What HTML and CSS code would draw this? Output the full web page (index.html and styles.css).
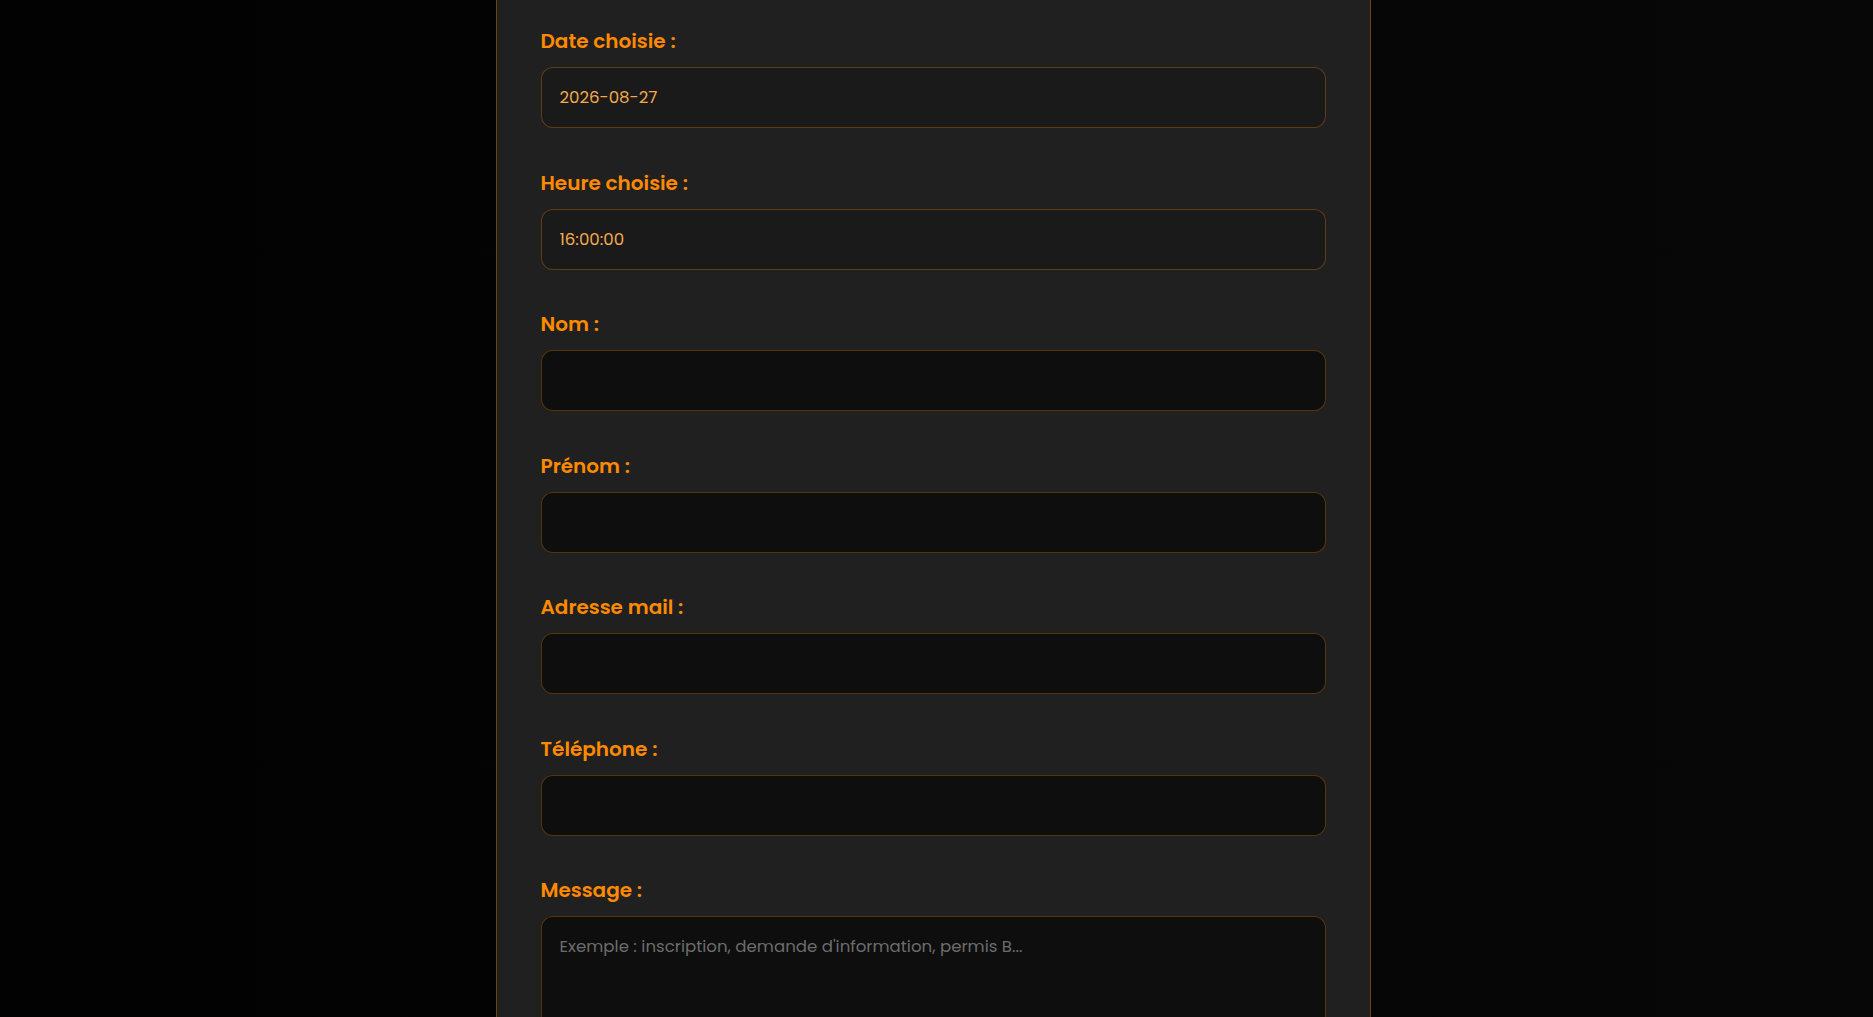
FILE: index.html
```html
<!DOCTYPE html>
<html lang="fr">
<head>
  <meta charset="UTF-8" />
  <meta name="viewport" content="width=device-width, initial-scale=1.0" />
  <title>Réservation</title>
  <link rel="stylesheet" href="styles.css">
</head>
<body>
  <div class="page">
    <div class="form-container">
      <form id="reservationForm">
        <div class="field">
          <label for="date">Date choisie :</label>
          <input type="text" id="date" class="readonly" value="2026-08-27" readonly />
        </div>

        <div class="field">
          <label for="heure">Heure choisie :</label>
          <input type="text" id="heure" class="readonly" value="16:00:00" readonly />
        </div>

        <div class="field">
          <label for="nom">Nom :</label>
          <input type="text" id="nom" required />
        </div>

        <div class="field">
          <label for="prenom">Prénom :</label>
          <input type="text" id="prenom" required />
        </div>

        <div class="field">
          <label for="email">Adresse mail :</label>
          <input type="email" id="email" required />
        </div>

        <div class="field">
          <label for="tel">Téléphone :</label>
          <input type="tel" id="tel" required />
        </div>

        <div class="field">
          <label for="message">Message :</label>
          <textarea id="message" placeholder="Exemple : inscription, demande d'information, permis B..."></textarea>
        </div>
      </form>
    </div>
  </div>
</body>
</html>
```

FILE: styles.css
```css
/* Formulaire de réservation */
body {
  margin: 0;
  font-family: "Poppins", "Inter", sans-serif;
  background: linear-gradient(90deg, #020202, #070707);
  color: #ddd;
}

.page {
  display: flex;
  justify-content: center;
  padding-right: 7px;
}

.form-container {
  width: 875px;
  box-sizing: border-box;
  background-color: #202020;
  border-left: 1px solid rgba(255, 140, 0, 0.35);
  border-right: 1px solid rgba(255, 140, 0, 0.35);
  padding: 29px 44px 60px;
}

.field {
  margin-bottom: 42.5px;
}

.field label {
  display: block;
  font-size: 20px;
  line-height: 24px;
  font-weight: 600;
  color: #ff8a00;
  margin-bottom: 14px;
}

.field input,
.field textarea {
  display: block;
  width: 100%;
  box-sizing: border-box;
  height: 61px;
  padding: 0 18px;
  background-color: #0e0e0e;
  border: 1px solid rgba(255, 140, 0, 0.3);
  border-radius: 12px;
  font-family: inherit;
  font-size: 16.6px;
  color: #f4a94e;
  outline: none;
}

.field input.readonly {
  background-color: #1a1a1a;
}

.field textarea {
  height: 160px;
  padding: 17px 18px;
  resize: vertical;
}

.field textarea::placeholder {
  color: #6c6c6c;
}
```
